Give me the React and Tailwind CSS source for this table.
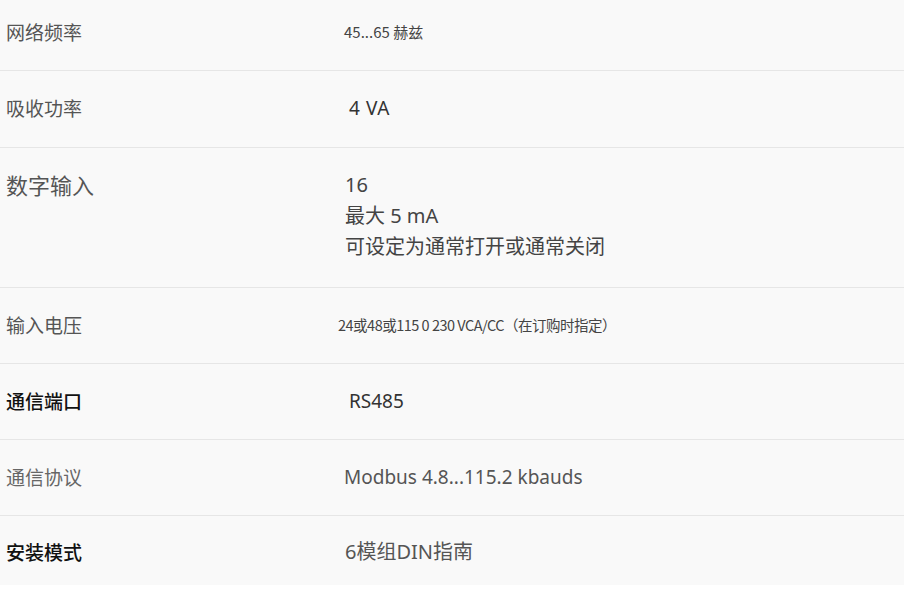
const wide = { fontFamily: '"Noto Sans", "Noto Sans CJK SC", sans-serif' }
const narrow = { fontFamily: '"Noto Sans CJK SC", sans-serif' }

const rows = [
  { label: '网络频率', lc: 'text-[#555]', value: ['45...65 赫兹'], vc: 'text-[15px] text-[#444] pl-[6px]', font: narrow, pad: 'pt-[17px] pb-[23px]' },
  { label: '吸收功率', lc: 'text-[#555]', value: ['4 VA'], vc: 'text-[19px] text-[#333] pl-[11px] tracking-[0.6px]', font: wide, pad: 'pt-[22px] pb-[24px]' },
  { label: '数字输入', lc: 'text-[#555] text-[22px]', value: ['16', '最大 5 mA', '可设定为通常打开或通常关闭'], vc: 'text-[20px] text-[#444] pl-[7px] leading-[31px]', font: wide, pad: 'pt-[21px] pb-[25px]' },
  { label: '输入电压', lc: 'text-[#555]', value: ['24或48或115 0 230 VCA/CC（在订购时指定）'], vc: 'text-[14.5px] text-[#444] tracking-[-0.5px]', font: narrow, pad: 'pt-[22px] pb-[23px]' },
  { label: '通信端口', lc: 'text-[#111] font-medium', value: ['RS485'], vc: 'text-[19px] text-[#333] pl-[11px]', font: wide, pad: 'pt-[22px] pb-[23px]' },
  { label: '通信协议', lc: 'text-[#666]', value: ['Modbus 4.8...115.2 kbauds'], vc: 'text-[19px] text-[#555] pl-[6px]', font: wide, pad: 'pt-[22px] pb-[23px]' },
  { label: '安装模式', lc: 'text-[#111] font-medium', value: ['6模组DIN指南'], vc: 'text-[20px] text-[#555] pl-[7px]', font: wide, pad: 'pt-[21px] pb-[18px]' },
]

export default function App() {
  return (
    <div className="w-[904px] h-[611px] bg-white overflow-hidden" style={narrow}>
      <div className="bg-[#f9f9f9]">
        {rows.map((r, i) => (
          <div key={r.label}
            className={`grid grid-cols-[338px_1fr] items-start ${r.pad} ${i < rows.length - 1 ? 'border-b border-[#e6e6e6]' : ''}`}>
            <div className={`pl-[6px] text-[19px] leading-[30px] ${r.lc}`}>{r.label}</div>
            <div className={`leading-[30px] ${r.vc}`} style={r.font}>
              {r.value.map(v => <div key={v}>{v}</div>)}
            </div>
          </div>
        ))}
      </div>
    </div>
  )
}
